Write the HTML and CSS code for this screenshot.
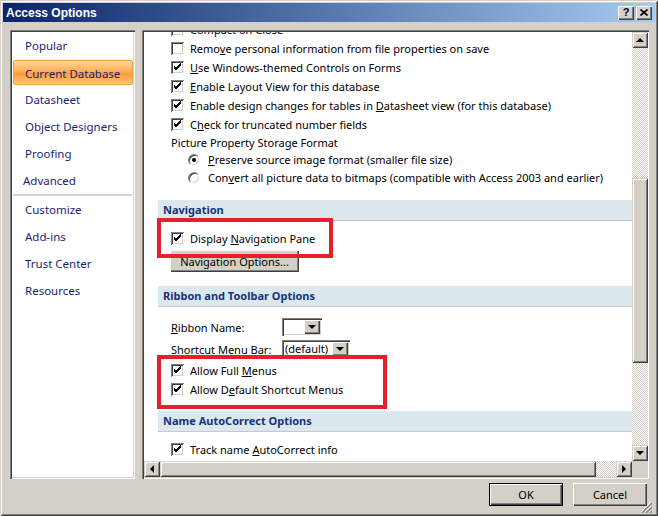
FILE: index.html
```html
<!DOCTYPE html>
<html lang="en">
<head>
	<meta charset="UTF-8">
	<meta name="viewport" content="width=device-width, initial-scale=1.0">
	<title>Access Options</title>
	<link rel="stylesheet" href="styles.css">
</head>
<body>
<div class="window">
	<div class="titlebar">
		<span class="title">Access Options</span>
		<div class="caption">
			<span class="cap-btn">?</span>
			<span class="cap-btn">
				<svg width="8" height="7" viewBox="0 0 8 7"><path d="M0.5 0.5 L7.5 6.5 M7.5 0.5 L0.5 6.5" stroke="#000" stroke-width="1.6"/></svg>
			</span>
		</div>
	</div>

	<div class="main">
		<ul class="nav">
			<li>Popular</li>
			<li class="active"><span>Current Database</span></li>
			<li>Datasheet</li>
			<li>Object Designers</li>
			<li>Proofing</li>
			<li class="adv">Advanced</li>
			<li class="sep"></li>
			<li>Customize</li>
			<li>Add-ins</li>
			<li>Trust Center</li>
			<li>Resources</li>
		</ul>

		<div class="pane">
			<div class="view">
				<div class="scroll">
					<div class="row"><span class="chk"></span><span>Compact on Close</span></div>
					<div class="row"><span class="chk"></span><span>Remo<u>v</u>e personal information from file properties on save</span></div>
					<div class="row"><span class="chk on"></span><span><u>U</u>se Windows-themed Controls on Forms</span></div>
					<div class="row"><span class="chk on"></span><span><u>E</u>nable Layout View for this database</span></div>
					<div class="row"><span class="chk on"></span><span>Enable design changes for tables in <u>D</u>atasheet view (for this database)</span></div>
					<div class="row"><span class="chk on"></span><span>C<u>h</u>eck for truncated number fields</span></div>
					<div class="row label">Picture Property Storage Format</div>
					<div class="row radio-row short"><span class="radio on"></span><span><u>P</u>reserve source image format (smaller file size)</span></div>
					<div class="row radio-row"><span class="radio"></span><span>Con<u>v</u>ert all picture data to bitmaps (compatible with Access 2003 and earlier)</span></div>

					<div class="section sec-nav">Navigation</div>
					<div class="row row-disp"><span class="chk on"></span><span>Display <u>N</u>avigation Pane</span></div>
					<button class="push nav-opt">Navigation Options...</button>

					<div class="section sec-ribbon">Ribbon and Toolbar Options</div>
					<div class="field field-ribbon">
						<span class="field-label"><u>R</u>ibbon Name:</span>
						<span class="combo combo-small"><span class="combo-text"></span><span class="combo-btn"><i class="tri-down"></i></span></span>
					</div>
					<div class="field field-shortcut">
						<span class="field-label">Shortcut Menu Bar:</span>
						<span class="combo"><span class="combo-text">(default)</span><span class="combo-btn"><i class="tri-down"></i></span></span>
					</div>
					<div class="row row-full"><span class="chk on"></span><span>Allow Full <u>M</u>enus</span></div>
					<div class="row"><span class="chk on"></span><span>Allow D<u>e</u>fault Shortcut Menus</span></div>

					<div class="section sec-auto">Name AutoCorrect Options</div>
					<div class="row row-track"><span class="chk on"></span><span>Track name <u>A</u>utoCorrect info</span></div>
				</div>
				<div class="mark mark-nav"></div>
				<div class="mark mark-menus"></div>
			</div>

			<div class="vbar">
				<span class="sb-btn"><i class="tri-up"></i></span>
				<span class="track track-top"></span>
				<span class="thumb thumb-v"></span>
				<span class="track"></span>
				<span class="sb-btn"><i class="tri-down"></i></span>
			</div>
			<div class="hbar">
				<span class="sb-btn"><i class="tri-left"></i></span>
				<span class="thumb thumb-h"></span>
				<span class="track"></span>
				<span class="sb-btn"><i class="tri-right"></i></span>
			</div>
			<div class="corner"></div>
		</div>
	</div>

	<div class="footer">
		<button class="push default">OK</button>
		<button class="push">Cancel</button>
		<svg class="grip" width="12" height="12" viewBox="0 0 12 12">
			<path d="M11 1 L1 11 M11 5 L5 11 M11 9 L9 11" stroke="#fff" stroke-width="1"/>
			<path d="M12 2 L2 12 M12 6 L6 12 M12 10 L10 12" stroke="#808080" stroke-width="1.4"/>
		</svg>
	</div>
</div>
</body>
</html>
```

FILE: styles.css
```css
body
{
	margin: 0;
	font-family: "Noto Sans", "Open Sans", sans-serif;
	font-size: 11px;
	color: #000;
}

.window
{
	width: 658px;
	height: 516px;
	box-sizing: border-box;
	padding: 3px;
	background: #d4d0c8;
	box-shadow: inset 1px 1px #d4d0c8, inset -1px -1px #404040, inset 2px 2px #fff, inset -2px -2px #808080;
	display: flex;
	flex-direction: column;
	position: relative;
}

/* title bar */
.titlebar
{
	height: 19px;
	display: flex;
	align-items: center;
	justify-content: space-between;
	padding: 0 3px 0 3px;
	background: linear-gradient(to right, #0a246a, #a6caf0);
}

.title
{
	font-family: "Liberation Sans", Arial, sans-serif;
	font-weight: bold;
	font-size: 12px;
	color: #fff;
}

.caption { display: flex; gap: 2px; }

.cap-btn
{
	width: 16px;
	height: 14px;
	box-sizing: border-box;
	display: flex;
	align-items: center;
	justify-content: center;
	background: #d4d0c8;
	box-shadow: inset 1px 1px #fff, inset -1px -1px #404040, inset -2px -2px #808080;
	font-family: "Liberation Sans", Arial, sans-serif;
	font-weight: bold;
	font-size: 11px;
	line-height: 1;
}

/* body */
.main
{
	display: flex;
	gap: 7px;
	margin: 8px 0 0 7px;
	height: 449px;
}

.nav
{
	list-style: none;
	margin: 0;
	padding: 2px 1px 0 2px;
	width: 125px;
	box-sizing: border-box;
	background: #fff;
	box-shadow: inset 1px 1px #808080, inset 2px 2px #404040, inset -1px -1px #fff, inset -2px -2px #d4d0c8;
	color: #1c1e6e;
	font-size: 11.5px;
}

.nav li
{
	height: 27px;
	line-height: 27px;
	padding-left: 13px;
}

.nav li.adv { padding-left: 11px; }

.nav li.active
{
	padding: 1px 1px 1px 1px;
	box-sizing: border-box;
}

.nav li.active span
{
	display: block;
	height: 25px;
	line-height: 25px;
	padding-left: 11px;
	border: 1px solid #e9a43c;
	box-sizing: border-box;
	border-radius: 2px;
	background: linear-gradient(#ffd79a, #ffae55 45%, #ff9d3a 55%, #ffc77a);
}

.nav li.sep
{
	height: 2px;
	margin: 0 2px 0 1px;
	padding: 0;
	background: #ccd3dc;
}

.pane
{
	flex: 1;
	margin-right: 6px;
	display: grid;
	grid-template-columns: 1fr 16px;
	grid-template-rows: 1fr 16px;
	padding: 2px 1px 2px 2px;
	background: #d4d0c8;
	box-shadow: inset 1px 1px #808080, inset 2px 2px #404040, inset -1px -1px #fff;
}

.view
{
	background: #fff;
	overflow: hidden;
	position: relative;
}

.scroll { margin-top: -12px; }

.row
{
	height: 19px;
	display: flex;
	align-items: center;
	gap: 6px;
	padding-left: 27px;
	white-space: nowrap;
}

.row.label { height: 17px; }
.radio-row { padding-left: 44px; gap: 8px; }
.radio-row.short { height: 17px; }

.chk
{
	width: 13px;
	height: 13px;
	flex: none;
	box-sizing: border-box;
	background: #fff;
	box-shadow: inset 1px 1px #808080, inset -1px -1px #fff, inset 2px 2px #404040, inset -2px -2px #d4d0c8;
}

.chk.on
{
	background: #fff url("data:image/svg+xml,%3Csvg xmlns='http://www.w3.org/2000/svg' width='13' height='13'%3E%3Cpath d='M3 6 L5 8 L10 3 M3 7 L5 9 L10 4 M3 5 L5 7 L10 2' stroke='%23000' stroke-width='1' fill='none'/%3E%3C/svg%3E") no-repeat;
}

.radio
{
	width: 12px;
	height: 12px;
	flex: none;
	border-radius: 50%;
	box-sizing: border-box;
	background: #fff;
	border: 1px solid;
	border-color: #808080 #fff #fff #808080;
	box-shadow: inset 1px 1px #404040, inset -1px -1px #d4d0c8;
	position: relative;
}

.radio.on::after
{
	content: "";
	position: absolute;
	left: 3px;
	top: 3px;
	width: 4px;
	height: 4px;
	border-radius: 50%;
	background: #000;
}

.section
{
	margin-left: 14px;
	height: 20px;
	line-height: 20px;
	padding-left: 5px;
	background: #dde7ee;
	border-bottom: 1px solid #c5c8cc;
	color: #15357a;
	font-weight: bold;
}

.sec-nav { margin-top: 13px; }
.sec-ribbon { margin-top: 14px; }
.sec-auto { margin-top: 12px; }

.row-disp { margin-top: 8px; }
.row-full { margin-top: 3px; }
.row-track { margin-top: 8px; }

.push
{
	font: inherit;
	color: #000;
	background: #d4d0c8;
	border: 0;
	padding: 0;
	box-shadow: inset 1px 1px #fff, inset -1px -1px #404040, inset -2px -2px #808080;
}

.nav-opt
{
	display: block;
	margin: 2px 0 0 26px;
	width: 129px;
	height: 22px;
}

.field
{
	display: flex;
	align-items: center;
	padding-left: 27px;
	height: 18px;
}

.field-ribbon { margin-top: 11px; }
.field-shortcut { margin-top: 4px; }

.field-label { width: 111px; }

.combo
{
	display: flex;
	width: 68px;
	height: 18px;
	box-sizing: border-box;
	padding: 2px;
	background: #fff;
	box-shadow: inset 1px 1px #808080, inset 2px 2px #404040, inset -1px -1px #fff, inset -2px -2px #d4d0c8;
}

.combo-small { width: 40px; }

.combo-text
{
	flex: 1;
	line-height: 14px;
	padding-left: 1px;
	white-space: nowrap;
}

.combo-btn
{
	width: 16px;
	display: flex;
	align-items: center;
	justify-content: center;
	background: #d4d0c8;
	box-shadow: inset 1px 1px #fff, inset -1px -1px #404040, inset -2px -2px #808080;
}

/* annotation boxes */
.mark
{
	position: absolute;
	border: 4px solid #e81f2a;
	box-sizing: border-box;
}

.mark-nav { left: 13px; top: 186px; width: 176px; height: 40px; }
.mark-menus { left: 13px; top: 323px; width: 230px; height: 54px; }

/* scrollbars */
.vbar, .hbar { display: flex; }
.vbar { flex-direction: column; }

.sb-btn
{
	width: 16px;
	height: 16px;
	flex: none;
	display: flex;
	align-items: center;
	justify-content: center;
	background: #d4d0c8;
	box-shadow: inset 1px 1px #d4d0c8, inset -1px -1px #404040, inset 2px 2px #fff, inset -2px -2px #808080;
}

.track
{
	flex: 1;
	background: repeating-conic-gradient(#d4d0c8 0 25%, #fff 0 50%) 0 0 / 2px 2px;
}

.track-top { flex: 0 0 130px; }

.thumb
{
	flex: none;
	background: #d4d0c8;
	box-shadow: inset 1px 1px #d4d0c8, inset -1px -1px #404040, inset 2px 2px #fff, inset -2px -2px #808080;
}

.thumb-v { height: 185px; }
.thumb-h { width: 436px; }

.corner { background: #d4d0c8; }

.tri-up, .tri-down, .tri-left, .tri-right { width: 0; height: 0; border: 4px solid transparent; }
.tri-up { border-bottom-color: #000; border-top-width: 0; }
.tri-down { border-top-color: #000; border-bottom-width: 0; }
.tri-left { border-right-color: #000; border-left-width: 0; }
.tri-right { border-left-color: #000; border-right-width: 0; }

/* footer */
.footer
{
	display: flex;
	justify-content: flex-end;
	gap: 10px;
	margin: 4px 8px 0 0;
	position: relative;
	flex: 1;
}

.footer .push
{
	width: 74px;
	height: 23px;
}

.footer .push.default
{
	box-shadow: inset 0 0 0 1px #000, inset 2px 2px #fff, inset -2px -2px #404040, inset -3px -3px #808080;
}

.grip
{
	position: absolute;
	right: -5px;
	bottom: 0;
}
```
